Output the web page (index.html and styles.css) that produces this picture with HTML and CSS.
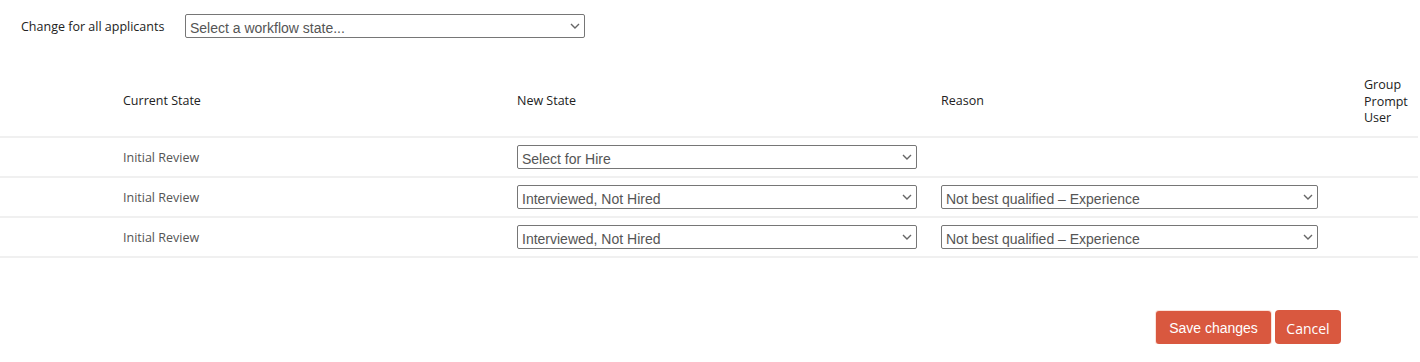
FILE: index.html
```html
<!DOCTYPE html>
<html lang="en">
<head>
<meta charset="utf-8">
<title>Change workflow state</title>
<link rel="stylesheet" href="styles.css">
</head>
<body>
<div class="bulk">
  <label class="bulk-label" for="bulk">Change for all applicants</label>
  <span class="sel-wrap sel-bulk">
    <select id="bulk" class="sel"><option>Select a workflow state...</option></select>
    <svg class="chev" width="10" height="6" viewBox="0 0 10 6"><polyline points="1,1 5,5 9,1" fill="none" stroke="#666" stroke-width="1.4"/></svg>
  </span>
</div>

<div class="table">
  <div class="row head">
    <div class="cell"></div>
    <div class="cell">Current State</div>
    <div class="cell">New State</div>
    <div class="cell">Reason</div>
    <div class="cell">Group Prompt User</div>
  </div>
  <div class="row">
    <div class="cell"></div>
    <div class="cell">Initial Review</div>
    <div class="cell"><span class="sel-wrap sel-state"><select class="sel"><option>Select for Hire</option></select><svg class="chev" width="10" height="6" viewBox="0 0 10 6"><polyline points="1,1 5,5 9,1" fill="none" stroke="#666" stroke-width="1.4"/></svg></span></div>
    <div class="cell"></div>
    <div class="cell"></div>
  </div>
  <div class="row">
    <div class="cell"></div>
    <div class="cell">Initial Review</div>
    <div class="cell"><span class="sel-wrap sel-state"><select class="sel"><option>Interviewed, Not Hired</option></select><svg class="chev" width="10" height="6" viewBox="0 0 10 6"><polyline points="1,1 5,5 9,1" fill="none" stroke="#666" stroke-width="1.4"/></svg></span></div>
    <div class="cell"><span class="sel-wrap sel-reason"><select class="sel"><option>Not best qualified – Experience</option></select><svg class="chev" width="10" height="6" viewBox="0 0 10 6"><polyline points="1,1 5,5 9,1" fill="none" stroke="#666" stroke-width="1.4"/></svg></span></div>
    <div class="cell"></div>
  </div>
  <div class="row">
    <div class="cell"></div>
    <div class="cell">Initial Review</div>
    <div class="cell"><span class="sel-wrap sel-state"><select class="sel"><option>Interviewed, Not Hired</option></select><svg class="chev" width="10" height="6" viewBox="0 0 10 6"><polyline points="1,1 5,5 9,1" fill="none" stroke="#666" stroke-width="1.4"/></svg></span></div>
    <div class="cell"><span class="sel-wrap sel-reason"><select class="sel"><option>Not best qualified – Experience</option></select><svg class="chev" width="10" height="6" viewBox="0 0 10 6"><polyline points="1,1 5,5 9,1" fill="none" stroke="#666" stroke-width="1.4"/></svg></span></div>
    <div class="cell"></div>
  </div>
</div>

<div class="actions">
  <button class="btn btn-save">Save changes</button>
  <button class="btn btn-cancel">Cancel</button>
</div>
</body>
</html>
```

FILE: styles.css
```css
html, body {
  margin: 0;
  padding: 0;
  background: #fff;
}
body {
  font-family: "Open Sans", "Liberation Sans", sans-serif;
  font-size: 12.5px;
  color: #222;
  width: 1418px;
}

.bulk {
  display: flex;
  align-items: center;
  padding: 14px 0 0 21px;
  height: 24px;
}
.bulk-label {
  width: 164px;
  color: #222;
}

.sel-wrap {
  position: relative;
  display: inline-block;
  height: 24px;
}
.sel {
  -webkit-appearance: none;
  appearance: none;
  display: block;
  width: 100%;
  font-family: "Liberation Sans", Arial, sans-serif;
  font-size: 14px;
  color: #555;
  height: 24px;
  padding: 4px 20px 0 4px;
  border: 1px solid #767676;
  border-radius: 2px;
  background: #fff;
  margin: 0;
  box-sizing: border-box;
}
.chev {
  position: absolute;
  right: 5px;
  top: 9px;
  pointer-events: none;
}
.sel-bulk { width: 400px; }
.sel-state { width: 400px; }
.sel-reason { width: 377px; }

.table {
  margin-top: 32px;
}
.row {
  display: grid;
  grid-template-columns: 111px 394px 424px 423px 66px;
  height: 40px;
  border-bottom: 2px solid #f0f0f0;
  box-sizing: border-box;
}
.row.head {
  height: 68px;
  padding-bottom: 4px;
}
.cell {
  display: flex;
  align-items: center;
  padding-left: 12px;
  color: #555;
}
.head .cell {
  color: #222;
  line-height: 16.5px;
}
.head .cell:last-child {
  padding-top: 2px;
}

.actions {
  display: flex;
  justify-content: flex-end;
  align-items: center;
  gap: 4px;
  padding-right: 77px;
  margin-top: 52px;
}
.btn {
  background: #d9583f;
  color: #fff;
  border: none;
  border-radius: 4px;
  margin: 0;
  padding: 2px 0 0;
  cursor: pointer;
}
.btn-save {
  font-family: "Liberation Sans", Arial, sans-serif;
  font-size: 14px;
  width: 115px;
  height: 33px;
  box-shadow: 0 0 0 1px #fbe2da;
  border-radius: 3px;
}
.btn-cancel {
  font-family: "Open Sans", sans-serif;
  font-size: 14px;
  width: 66px;
  height: 34px;
}
```
